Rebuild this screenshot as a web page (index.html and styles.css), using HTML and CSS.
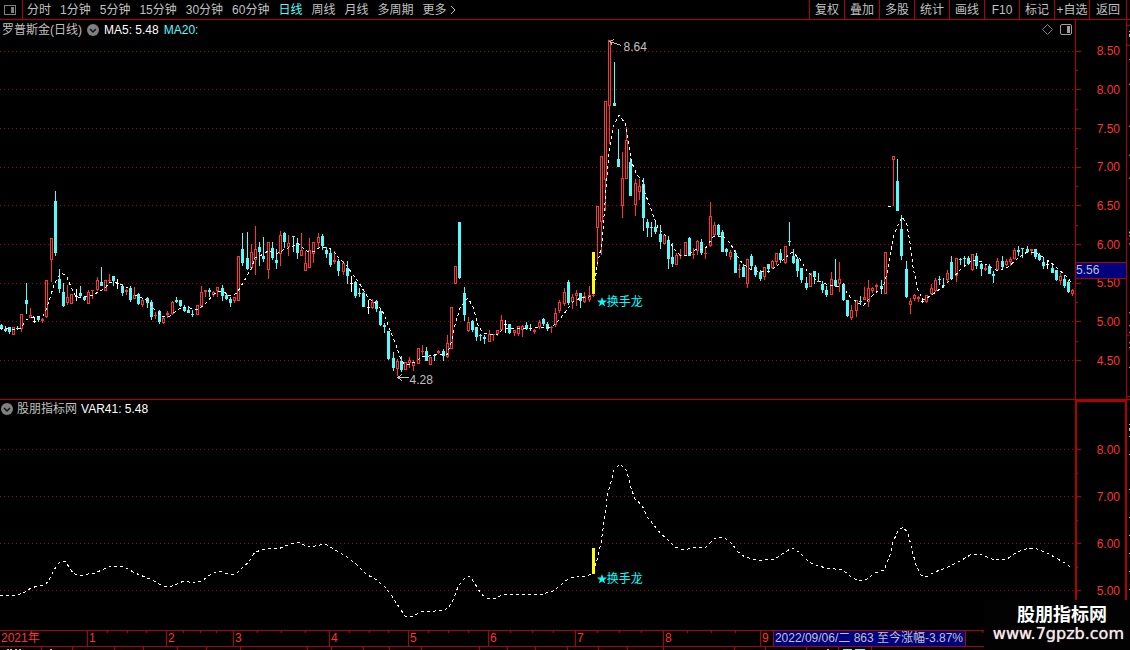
FILE: index.html
```html
<!DOCTYPE html>
<html lang="zh-CN">
<head>
<meta charset="utf-8">
<title>罗普斯金 日线</title>
<link rel="stylesheet" href="styles.css">
</head>
<body>
<div class="terminal">
  <header class="toolbar">
    <button class="panel-toggle" aria-label="侧栏">
      <svg width="12" height="10" viewBox="0 0 12 10" class="crisp"><rect x=".5" y=".5" width="11" height="9" rx="1" fill="none" stroke="#808080"/><rect x="7" y="2" width="3" height="6" fill="#808080"/></svg>
    </button>
    <nav class="periods">
      <button>分时</button><button>1分钟</button><button>5分钟</button><button>15分钟</button><button>30分钟</button><button>60分钟</button><button class="active">日线</button><button>周线</button><button>月线</button><button>多周期</button><button class="more">更多<svg width="6" height="10" viewBox="0 0 6 10"><path d="M1 1l4 4-4 4" fill="none" stroke="#c0c0c0"/></svg></button>
    </nav>
    <div class="tools">
      <button>复权</button><button>叠加</button><button>多股</button><button>统计</button><button>画线</button><button>F10</button><button>标记</button><button>+自选</button><button>返回</button>
    </div>
  </header>

  <main class="panel price-panel">
    <section class="plot">
      <svg id="price" class="chart crisp" viewBox="0 20 1075 379" preserveAspectRatio="none"></svg>
      <div class="legend">
        <span>罗普斯金(日线)</span>
        <button class="fold" aria-label="指标菜单"><svg width="12" height="12" viewBox="0 0 12 12"><circle cx="6" cy="6" r="6" fill="#808080"/><path d="M3 5l3 3 3-3" fill="none" stroke="#101010" stroke-width="1.5"/></svg></button>
        <span class="white">MA5: 5.48</span>
        <span class="ma20">MA20:</span>
      </div>
      <div class="corner">
        <button aria-label="标记点"><svg width="11" height="11" viewBox="0 0 11 11"><path d="M5.500 .5l5 5-5 5-5-5z" fill="none" stroke="#808080"/></svg></button>
        <button aria-label="布局"><svg width="12" height="11" viewBox="0 0 12 11"><rect x=".5" y=".5" width="11" height="10" rx="1.500" fill="none" stroke="#a0a0a0"/><rect x="7" y="2" width="3" height="7" fill="#a0a0a0"/></svg></button>
      </div>
      <span class="note high">8.64</span>
      <span class="note low">4.28</span>
      <span class="signal signal-price"><svg width="10" height="10" viewBox="0 0 10 10"><path d="M5 0l1.200 3.600H10L7 5.900 8.200 9.600 5 7.300 1.800 9.600 3 5.900 0 3.600h3.800z" fill="#00ffff"/></svg>换手龙</span>
    </section>
    <aside class="axis">
      <span>8.50</span><span>8.00</span><span>7.50</span><span>7.00</span><span>6.50</span><span>6.00</span><span>5.50</span><span>5.00</span><span>4.50</span>
      <output class="cursor-price">5.56</output>
    </aside>
    <svg class="edge crisp" viewBox="0 20 3 380" preserveAspectRatio="none">
      <path d="M0 25.500h3M0 45.500h3M0 239.500h3M0 336.500h3M0 397.500h3" stroke="#b00000"/>
      <path d="M2.500 31v1M2.500 34v3M2.500 59v1M2.500 84v1M2.500 126v1M2.500 155v1M2.500 178v1M2.500 232v2M2.500 236v1M2.500 244v1M2.500 313v1M2.500 326v1M2.500 333v1M2.500 343v1M2.500 348v1M2.500 368v1" stroke="#c0c0c0"/>
    </svg>
  </main>

  <section class="panel indicator-panel">
    <div class="plot">
      <svg id="indicator" class="chart crisp" viewBox="0 400 1075 230" preserveAspectRatio="none"></svg>
      <div class="legend">
        <button class="fold" aria-label="指标菜单"><svg width="12" height="12" viewBox="0 0 12 12"><circle cx="6" cy="6" r="6" fill="#808080"/><path d="M3 5l3 3 3-3" fill="none" stroke="#101010" stroke-width="1.5"/></svg></button>
        <span>股朋指标网</span>
        <span class="white">VAR41: 5.48</span>
      </div>
      <span class="signal signal-indicator"><svg width="10" height="10" viewBox="0 0 10 10"><path d="M5 0l1.200 3.600H10L7 5.900 8.200 9.600 5 7.300 1.800 9.600 3 5.900 0 3.600h3.800z" fill="#00ffff"/></svg>换手龙</span>
    </div>
    <aside class="axis">
      <span>8.00</span><span>7.00</span><span>6.00</span><span>5.00</span>
    </aside>
    <svg class="edge crisp" viewBox="0 400 3 230" preserveAspectRatio="none">
      <path d="M2.500 424v1M2.500 428v3M2.500 436v1M2.500 454v1M2.500 489v1M2.500 517v1M2.500 535v1M2.500 553v1M2.500 571v1M2.500 589v1" stroke="#c0c0c0"/>
    </svg>
  </section>

  <footer class="timeline">
    <span>2021年</span><span>1</span><span>2</span><span>3</span><span>4</span><span>5</span><span>6</span><span>7</span><span>8</span><span>9</span>
    <output class="cursor-date">2022/09/06/二 863 至今涨幅-3.87%</output>
    <svg id="ticks" class="ticks crisp" viewBox="0 630 1130 4" preserveAspectRatio="none"></svg>
  </footer>
  <svg id="strip" class="strip crisp" viewBox="0 647 1130 3" preserveAspectRatio="none"></svg>

  <div class="site">
    <strong>股朋指标网</strong>
    <a href="#">www.7gpzb.com</a>
  </div>
</div>
<script src="chart.js"></script>
</body>
</html>
```
FILE: styles.css
```css
* { box-sizing: border-box; }

body {
  margin: 0;
  background: #000;
  color: #c0c0c0;
  font: 12px/16px "Liberation Sans", "Noto Sans CJK SC", sans-serif;
}

button {
  margin: 0;
  padding: 0;
  border: 0;
  background: none;
  color: inherit;
  font: inherit;
  white-space: nowrap;
  cursor: pointer;
}

svg { display: block; }
.crisp { shape-rendering: crispEdges; }

.terminal {
  position: relative;
  display: grid;
  grid-template-rows: 20px 380fr 230fr 17px 3px;
  height: 100vh;
  min-height: 480px;
  overflow: hidden;
}

.toolbar {
  display: flex;
  border-bottom: 1px solid #b00000;
  padding-right: 3px;
}

.panel-toggle {
  width: 23px;
  padding-left: 4px;
  border-right: 1px solid #b00000;
}

.periods {
  display: flex;
  flex: 1;
  gap: 9px;
  padding-left: 4px;
}

.periods .active { color: #54fcfc; }

.more {
  display: flex;
  align-items: center;
  gap: 3px;
}

.tools {
  display: flex;
  border-right: 1px solid #b00000;
}

.tools button {
  width: 35px;
  border-left: 1px solid #b00000;
}

.tools button:last-child { width: 37px; }

.panel {
  display: grid;
  grid-template-columns: 1fr 52px 3px;
  min-height: 0;
}

.price-panel { border-bottom: 1px solid #b00000; }

.plot {
  position: relative;
  display: grid;
  min-height: 0;
}

.chart {
  grid-area: 1 / 1;
  width: 100%;
  height: 100%;
  min-height: 0;
  overflow: visible;
}

.legend {
  grid-area: 1 / 1;
  display: flex;
  align-items: center;
  align-self: start;
  gap: 5px;
  padding: 2px;
}

.indicator-panel .legend {
  gap: 4px;
  padding: 1px;
}

.white { color: #fff; }
.ma20 { color: #54fcfc; }

.corner {
  grid-area: 1 / 1;
  display: flex;
  align-self: start;
  justify-self: end;
  gap: 7px;
  padding: 4px 3px;
}

.note, .signal {
  position: absolute;
  transform: translateY(-50%);
}

.high { left: 58%; top: 7%; }
.low { left: 38.1%; top: 95%; }

.signal {
  display: flex;
  align-items: center;
  color: #00ffff;
}

.signal-price { left: 55.500%; top: 74.500%; }
.signal-indicator { left: 55.500%; top: 78%; }

.axis {
  position: relative;
  display: flex;
  flex-direction: column;
  padding: 12px 6px 19px 0;
  border: solid #b00000;
  border-width: 0 1px;
  color: #ff3232;
  text-align: right;
}

.axis span {
  display: flex;
  flex: 1;
  align-items: center;
  justify-content: flex-end;
}

.indicator-panel .axis {
  padding: 24px 5px 16px 0;
  border-width: 2px 2px 0;
}

.cursor-price {
  position: absolute;
  left: 0;
  right: 0;
  top: 63.800%;
  height: 17px;
  border: solid #b00000;
  border-width: 1px 0;
  background: #000080;
  color: #c0c0c0;
  line-height: 15px;
  text-align: left;
}

.edge {
  width: 3px;
  height: 100%;
  min-height: 0;
}

.timeline {
  position: relative;
  display: grid;
  grid-template-columns: 87fr 79fr 67fr 96fr 79fr 80fr 87fr 88fr 97fr 370fr;
  border: solid #b00000;
  border-width: 1px 0;
  color: #ff3232;
  line-height: 15px;
}

.timeline span {
  padding-left: 1px;
  border-left: 1px solid #b00000;
}

.timeline span:first-child { border-left: 0; }

.cursor-date {
  position: absolute;
  left: 68.400%;
  top: 0;
  padding: 0 2px 0 1px;
  border: solid #b00000;
  border-width: 0 1px;
  background: #000080;
  color: #c0c0c0;
  white-space: nowrap;
}

.ticks {
  position: absolute;
  left: 0;
  top: 0;
  width: 100%;
  height: 3px;
}

.strip {
  width: 100%;
  height: 3px;
}

.site {
  position: absolute;
  right: 0;
  bottom: 0;
  width: 146px;
  height: 50px;
  padding: 5px 6px 0 0;
  background: #020202;
  color: #fff;
  text-align: right;
}

.site strong {
  display: block;
  padding-right: 17px;
  font-size: 18px;
  line-height: 20px;
}

.site a {
  display: block;
  color: #f4e8e8;
  font: 16px/18px "DejaVu Sans", sans-serif;
  text-decoration: none;
  text-shadow: 0 0 1px #f4e8e8;
}
```
FILE: chart.js
```js
// Candles: x, high, body top, body bottom, low, colour (r = up, c = down, w = flat)
const candles = `1,324,325,328,330,c 5,326,329,331,332,c 9,327,327,332,334,c 13,327,327,335,335,r 17,326,328,329,330,c 21,314,314,329,332,r 26,283,300,304,314,c 30,308,315,318,318,r 34,317,321,321,323,w 38,317,317,320,322,c 42,318,319,321,323,r 46,280,280,317,318,r 51,238,238,260,282,r 55,191,201,253,256,c 59,269,279,289,293,c 63,283,292,306,307,c 67,285,297,303,305,r 71,294,294,304,304,r 76,289,296,296,301,w 80,286,293,296,297,c 84,296,297,300,301,c 88,290,292,304,304,r 92,290,290,290,299,r 97,277,280,290,291,r 101,267,282,286,286,c 105,280,280,291,291,r 109,274,280,280,283,r 113,276,276,281,286,c 117,279,283,283,289,w 122,284,286,293,296,c 126,289,290,292,295,r 130,286,288,300,302,c 134,287,295,299,299,r 138,293,294,304,305,c 142,299,300,305,307,r 147,297,298,303,308,c 151,300,302,317,320,c 155,312,315,315,319,r 159,310,311,322,324,c 163,316,318,323,324,r 167,311,313,315,318,r 172,301,302,314,315,r 176,297,300,302,303,c 180,300,300,306,307,c 184,305,307,311,312,c 188,306,310,313,313,c 192,310,314,314,317,c 197,305,305,315,315,r 201,286,292,306,308,r 205,290,290,292,297,r 209,288,290,292,297,c 213,291,292,295,297,r 217,287,287,291,297,r 222,285,288,296,301,c 226,293,295,299,300,c 230,297,299,303,307,c 234,297,297,301,303,r 238,256,256,301,301,r 242,233,249,263,266,c 247,232,258,269,270,c 251,244,252,268,270,r 255,226,249,260,275,r 259,242,247,252,266,c 263,237,256,259,262,c 268,242,242,270,279,r 272,242,248,258,260,c 276,249,260,263,269,c 280,231,235,254,266,r 284,232,233,242,248,c 288,235,243,247,256,r 293,236,236,236,252,c 297,238,243,253,259,c 301,233,250,256,256,r 305,251,263,271,271,r 309,238,250,268,268,r 313,242,242,254,263,r 318,233,237,243,248,r 322,234,236,246,250,c 326,247,250,254,258,c 330,250,253,265,267,c 334,251,260,262,264,r 338,259,261,271,276,c 343,261,263,272,275,r 347,261,268,276,284,c 351,276,283,283,292,w 355,281,282,296,298,c 359,288,293,293,297,c 363,292,293,307,307,c 368,300,307,307,314,w 372,299,302,308,309,r 376,300,301,309,312,c 380,309,311,325,326,c 384,323,325,327,333,c 388,331,331,359,360,c 393,352,358,368,371,c 397,359,361,369,376,r 401,356,361,370,372,c 405,362,362,370,370,r 409,357,360,363,368,r 413,360,362,366,371,r 418,348,348,364,364,r 422,345,351,351,355,r 426,347,351,361,361,c 430,357,357,365,365,r 434,354,355,355,361,c 438,350,351,353,354,r 443,349,351,356,361,c 447,335,343,357,358,r 451,307,307,349,349,r 455,266,266,284,284,r 459,222,222,278,279,c 464,287,293,315,321,c 468,317,322,331,332,r 472,320,321,330,332,c 476,327,327,337,341,c 480,334,335,335,341,c 484,335,337,339,344,c 489,330,334,342,342,r 493,334,334,334,341,r 497,330,330,334,336,r 501,315,320,330,330,r 505,320,324,324,333,w 509,324,324,333,334,c 514,330,330,333,336,r 518,326,326,334,336,r 522,325,326,330,337,r 526,322,325,329,330,c 530,324,328,328,331,c 534,329,330,332,334,r 539,320,322,327,329,r 543,318,319,324,326,c 547,322,324,329,331,c 551,326,327,327,333,r 555,308,313,325,327,r 559,300,302,311,313,r 564,288,292,304,306,r 568,280,282,303,305,c 572,294,297,302,309,r 576,290,293,296,306,r 580,293,293,301,308,c 584,292,296,302,303,r 589,286,295,300,302,r 593,294,295,295,297,r 597,206,206,228,266,r 601,156,156,222,255,r 605,101,101,180,211,r 609,40,40,106,144,r 614,62,103,106,106,c 618,129,159,167,167,c 622,152,178,206,218,r 626,127,140,179,179,r 630,158,162,196,196,c 635,179,183,205,216,r 639,179,186,192,200,r 643,178,184,218,231,c 647,219,222,228,237,c 651,222,227,227,237,c 655,221,227,232,234,c 660,225,234,242,249,c 664,234,235,244,245,r 668,236,240,259,269,c 672,243,257,264,267,c 676,253,255,265,265,r 680,249,255,255,259,r 685,242,242,256,256,r 689,237,238,256,256,c 693,248,254,254,259,r 697,240,241,251,255,r 701,239,242,253,255,c 705,247,253,253,259,r 710,202,216,246,247,r 714,222,225,235,236,r 718,224,225,235,236,c 722,230,232,252,252,c 726,248,249,252,256,c 730,250,252,257,260,r 735,250,253,273,273,c 739,264,269,269,278,r 743,264,267,277,277,c 747,259,259,284,288,r 751,254,256,266,269,c 755,265,267,275,277,c 760,270,272,279,281,c 764,267,267,277,280,r 768,264,264,269,273,c 772,260,261,268,269,r 776,253,253,262,265,r 780,249,253,260,263,c 785,246,246,263,264,r 789,222,241,241,246,c 793,249,256,263,264,c 797,257,259,271,277,c 801,268,268,280,283,c 806,277,283,288,290,c 810,273,273,287,287,r 814,271,271,277,284,c 818,273,281,281,282,c 822,281,284,290,293,c 826,286,290,295,297,c 831,272,279,295,295,r 835,259,280,286,287,c 839,262,279,284,292,r 843,283,284,300,301,c 847,300,300,316,317,c 851,305,310,318,320,r 856,300,300,311,317,r 860,296,301,301,305,c 864,287,297,300,300,r 868,280,288,302,307,r 872,287,288,291,293,r 876,284,285,287,292,r 881,280,286,289,294,c 885,252,252,294,294,r 889,206,206,206,207,w 893,156,156,160,206,r 897,159,181,211,211,c 901,215,229,256,260,c 906,261,269,297,298,c 910,298,301,305,314,r 914,294,295,299,301,r 918,296,297,299,302,r 922,298,301,301,303,w 926,295,295,302,303,r 931,284,288,294,295,r 935,278,280,291,292,r 939,276,279,279,285,c 943,278,285,286,288,c 947,270,273,280,283,r 951,256,262,279,280,c 956,258,258,276,282,r 960,258,259,259,265,c 964,256,258,258,266,c 968,256,258,264,265,c 972,254,254,270,271,r 976,253,256,266,269,c 981,263,264,269,276,c 985,265,268,270,271,r 989,264,266,274,274,c 993,271,274,276,283,c 997,258,261,270,271,r 1002,256,261,267,269,c 1006,259,261,265,266,r 1010,257,259,262,266,r 1014,248,250,259,259,r 1018,246,250,252,256,c 1022,248,248,248,258,c 1027,246,249,252,253,c 1031,249,249,251,255,r 1035,249,249,257,259,c 1039,253,255,260,261,c 1043,258,262,266,269,c 1047,261,264,264,269,w 1052,264,268,273,273,c 1056,270,270,280,281,c 1060,273,276,281,285,r 1064,275,279,286,288,c 1068,280,282,292,293,c 1072,289,290,294,296,r`;

const average = `0,328 8,329 16,329 21,328 26,320 30,318 37,316 43,316 46,310 50,298 54,285 58,277 62,273 67,277 71,287 76,297 83,297 88,296 93,295 100,291 105,288 110,282 117,282 122,285 128,288 135,295 142,298 148,301 155,310 162,316 170,316 176,311 182,307 190,308 196,310 203,306 208,301 213,295 218,291 224,292 230,296 237,293 243,283 251,269 255,258 260,256 268,251 276,254 280,252 285,249 293,246 298,243 302,247 307,251 315,251 320,247 329,248 333,251 340,259 347,266 353,275 358,281 368,298 377,304 384,314 390,330 395,342 400,357 404,364 410,364 417,361 422,356 429,356 437,354 447,355 452,340 455,325 460,308 468,298 473,307 478,325 483,333 497,335 503,329 517,328 533,328 543,327 552,327 558,321 567,310 573,302 582,297 588,298 593,293 597,267 602,243 605,203 609,153 613,127 619,115 625,123 628,140 632,163 637,175 642,180 645,193 652,212 658,228 667,237 673,248 680,255 688,255 695,250 705,249 713,237 723,236 730,243 735,252 742,263 750,269 757,271 770,271 777,266 785,258 792,252 800,259 807,271 815,279 823,283 833,286 843,287 850,297 857,302 863,306 868,300 875,293 883,288 888,270 893,238 897,227 902,217 907,225 910,243 913,267 918,290 923,300 932,295 940,289 953,278 963,267 973,260 982,262 990,267 998,271 1008,267 1017,259 1027,252 1035,252 1043,257 1050,262 1057,268 1065,275 1072,283`;

// The indicator plots the same averages on its own scale
const indicator = `0,595 13,596 20,594 25,592 31,588 38,586 45,585 49,580 53,572 57,565 60,562 65,561 69,567 73,573 80,576 88,574 95,573 104,569 112,566 120,566 128,569 135,573 145,577 152,580 163,586 172,586 184,581 194,583 202,581 210,575 218,571 229,574 236,574 242,568 249,562 255,552 262,550 268,548 278,549 288,545 298,542 308,547 315,546 325,544 334,549 340,553 350,559 358,566 366,574 375,579 383,585 390,593 397,604 405,616 413,616 423,611 435,611 445,610 449,607 453,600 458,587 464,579 469,576 474,582 481,594 487,598 494,599 504,594 520,594 530,594 543,594 553,591 562,584 568,579 577,576 588,576 593,572 597,560 601,543 604,522 608,492 611,482 614,470 620,464 627,471 630,485 635,499 642,505 647,517 653,524 661,534 668,540 675,547 683,550 697,547 706,547 714,539 724,537 732,544 738,552 745,557 756,560 765,560 775,559 785,552 792,548 799,552 809,562 818,566 827,568 843,570 852,578 862,581 867,579 875,573 884,570 890,555 893,542 898,531 903,527 908,533 912,550 916,565 921,575 926,577 935,572 948,567 960,561 972,554 980,554 994,560 1007,559 1017,552 1029,548 1037,549 1047,553 1056,558 1065,563 1072,568`;

const colours = { r: '#ff3232', c: '#54fcfc', w: '#ffffff' };
const rect = (x, y, w, h, fill) => `<rect x="${x}" y="${y}" width="${w}" height="${h}" fill="${fill}"/>`;
const grid = rows => rows.map(y =>
  `<path d="M0 ${y + 0.5}H1075" stroke="#b00000" stroke-dasharray="1 3"/>` + rect(1076, y, 5, 1, '#b00000')).join('');
const minor = rows => rows.map(y => rect(1076, y, 2, 1, '#b00000')).join('');
const dashed = points => `<polyline points="${points}" fill="none" stroke="#ffffff" stroke-dasharray="3 3"/>`;

function drawCandle(text) {
  const parts = text.split(',');
  const [x, high, top, bottom, low] = parts.map(Number);
  const fill = colours[parts[5]];
  const height = Math.max(1, bottom - top);
  let out = rect(x, high, 1, low - high, fill) + rect(x - 1, top, 3, height, fill);
  if (parts[5] === 'r' && height > 2) out += rect(x, top + 1, 1, height - 2, '#000000');
  return out;
}

document.getElementById('price').innerHTML =
  grid([51, 89, 128, 167, 205, 244, 283, 321, 360]) +
  minor([70, 109, 148, 186, 225, 263, 302, 341]) +
  candles.split(' ').map(drawCandle).join('') +
  dashed(average) +
  rect(592, 252, 3, 42, '#ffff00') +
  '<path d="M621 45.500L610 41.500M614 39.500L610 41.500L612 45M409 377.500H398M402 374.500L398 377.500L402 380.500" fill="none" stroke="#c0c0c0"/>';

document.getElementById('indicator').innerHTML =
  grid([449, 496, 543, 590]) + minor([473, 520, 567]) +
  dashed(indicator) + rect(592, 548, 3, 26, '#ffff00');

document.getElementById('ticks').innerHTML =
  [107, 127, 146, 183, 200, 216, 257, 281, 305, 349, 369, 388, 428, 448, 468, 510, 532, 553, 597, 619, 641, 687, 711, 735, 982]
    .map(x => rect(x, 630, 1, 3, '#b00000')).join('');

document.getElementById('strip').innerHTML =
  [41, 72, 114, 143, 177, 206, 240, 307, 331, 363, 389, 421, 479, 507, 535, 567, 598, 627, 663, 734, 765, 806, 838, 871]
    .map(x => rect(x, 647, 1, 3, '#b00000')).join('') +
  [7, 10, 15, 19, 50, 827].map(x => rect(x, 649, 2, 1, '#c0c0c0')).join('') +
  rect(843, 649, 9, 1, '#54fcfc') + rect(855, 649, 10, 1, '#54fcfc');
```
